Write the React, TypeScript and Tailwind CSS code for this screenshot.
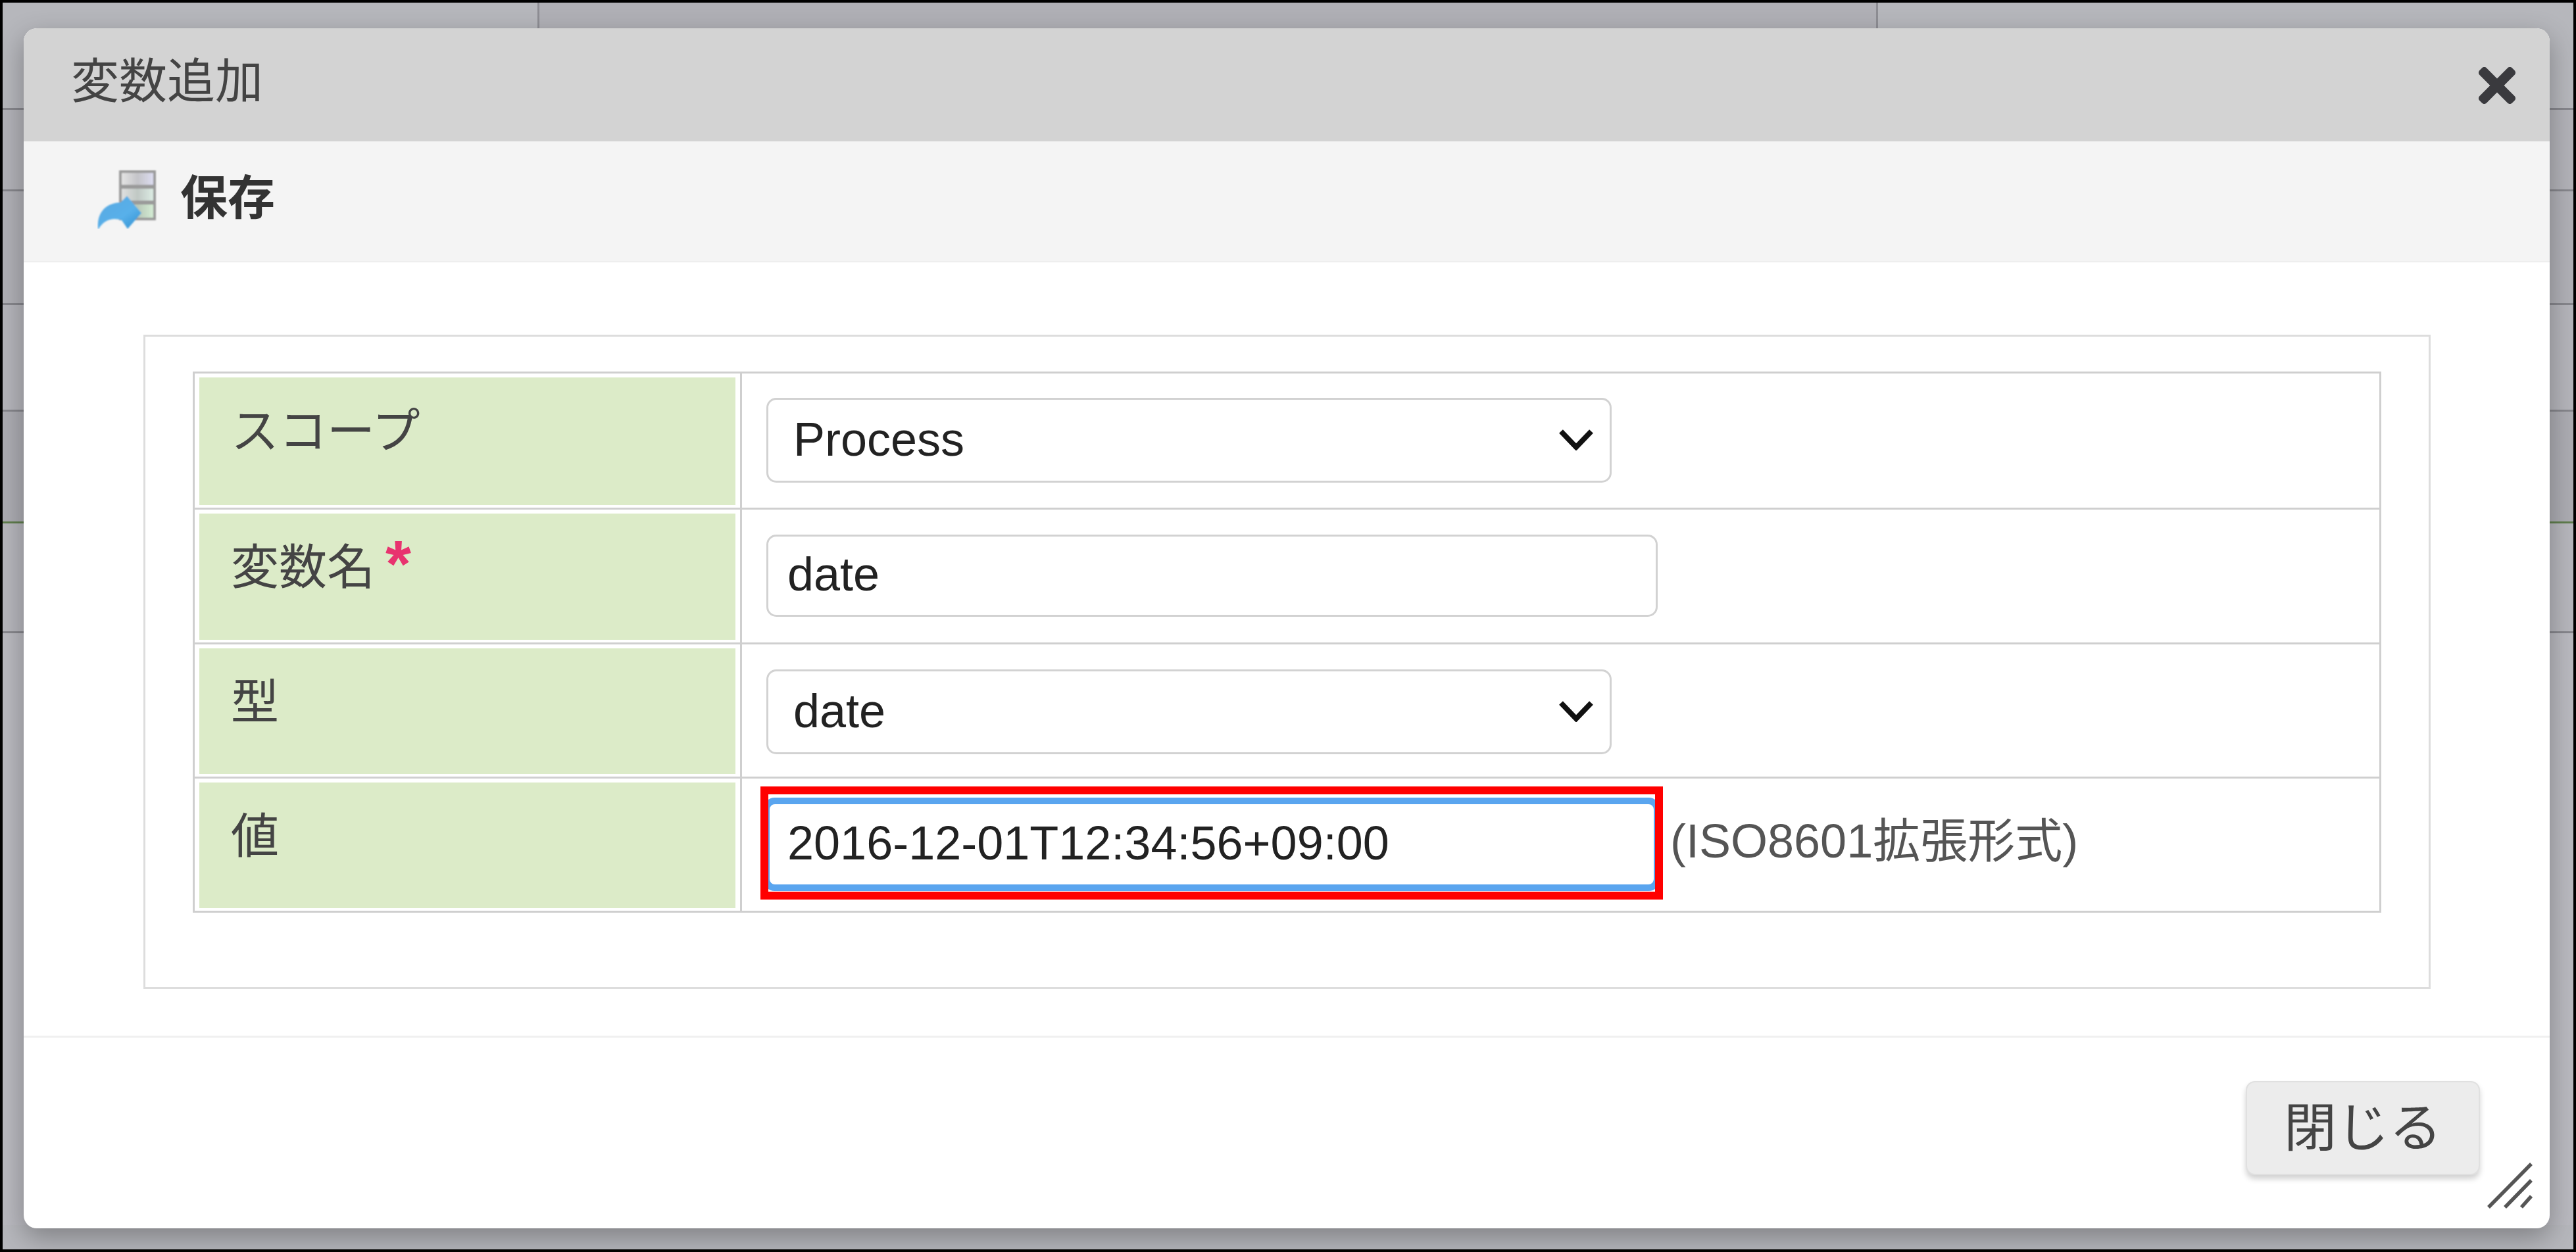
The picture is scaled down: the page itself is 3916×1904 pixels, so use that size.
import { FaTimes } from "react-icons/fa";

const font = "[font-family:'Liberation_Sans','Noto_Sans_CJK_JP',sans-serif]";

function SaveIcon() {
  return (
    <svg width="90" height="90" viewBox="0 0 90 90" className="shrink-0">
      <defs>
        <filter id="soft" x="-10%" y="-10%" width="120%" height="120%">
          <feGaussianBlur stdDeviation="1.3" />
        </filter>
        <linearGradient id="r1" x1="0" x2="1">
          <stop offset="0" stopColor="#e4e4e4" />
          <stop offset="0.5" stopColor="#c4c4c8" />
          <stop offset="1" stopColor="#dcdcf0" />
        </linearGradient>
        <linearGradient id="r2" x1="0" x2="1">
          <stop offset="0" stopColor="#e0e0e0" />
          <stop offset="0.5" stopColor="#c0c8c4" />
          <stop offset="1" stopColor="#dcece4" />
        </linearGradient>
        <linearGradient id="r3" x1="0" x2="1">
          <stop offset="0" stopColor="#d8d8d8" />
          <stop offset="0.5" stopColor="#b8c8b8" />
          <stop offset="1" stopColor="#d4ecd4" />
        </linearGradient>
        <linearGradient id="arrow" x1="0" y1="0" x2="1" y2="1">
          <stop offset="0" stopColor="#5aa8e0" />
          <stop offset="0.6" stopColor="#58b0ea" />
          <stop offset="1" stopColor="#2f8fd0" />
        </linearGradient>
      </defs>
      <g filter="url(#soft)">
        <rect x="33" y="1" width="56" height="76" fill="#9a9a9a" />
        <rect x="37" y="5" width="48" height="18" fill="url(#r1)" />
        <rect x="37" y="29" width="48" height="18" fill="url(#r2)" />
        <rect x="37" y="53" width="48" height="20" fill="url(#r3)" />
        <path
          d="M1 90 C-1 68 10 51 35 50 L45 40 L67 66 L46 90 L37 77 C24 72 10 76 2 90 Z"
          fill="url(#arrow)"
        />
      </g>
    </svg>
  );
}

function Chevron() {
  return (
    <svg
      width="54"
      height="33"
      viewBox="0 0 54 33"
      className="absolute right-[27px] top-[47px] pointer-events-none"
    >
      <path d="M4 4 L27 28 L50 4" fill="none" stroke="#111" strokeWidth="8" />
    </svg>
  );
}

function Label({ text, required }: { text: string; required?: boolean }) {
  return (
    <div className="w-[832px] shrink-0 border-r-[3px] border-[#cfcfcf] pl-[7px] pr-[7px] pt-[6px] pb-[4px]">
      <div className="flex h-full items-start bg-[#dcebc8] pl-[48px] pt-[32px] text-[73px] leading-[100px] text-[#444]">
        <span>{text}</span>
        {required && (
          <span className="ml-[16px] mt-[-6px] text-[100px] font-bold leading-[100px] text-[#e8336f]">*</span>
        )}
      </div>
    </div>
  );
}

function Select({ value, top }: { value: string; top: number }) {
  return (
    <div className={top === 37 ? "relative mt-[37px] w-[1285px]" : "relative mt-[38px] w-[1285px]"}>
      <select
        defaultValue={value}
        className="block h-[129px] w-full appearance-none rounded-[15px] border-[3px] border-[#d2d2d2] bg-white pb-[4px] pl-[38px] text-[72px] text-[#222] outline-none"
      >
        <option>{value}</option>
      </select>
      <Chevron />
    </div>
  );
}

export default function App() {
  return (
    <div className={`relative h-screen w-screen overflow-hidden border-4 border-black bg-[#b6b7bc] ${font}`}>
      {/* page behind the modal */}
      <div className="flex h-[163px] border-b-[3px] border-[#86868c]">
        <div className="w-[816px] border-r-[3px] border-[#8e8e94]" />
        <div className="w-[2035px] border-r-[3px] border-[#8e8e94] bg-[#b0b0b6]" />
      </div>
      <div className="h-[124px] border-b-[3px] border-[#86868c] bg-[#b2b2b8]" />
      <div className="h-[173px] border-b-[3px] border-[#86868c] bg-[#b0b0b6]" />
      <div className="h-[162px] border-b-[3px] border-[#86868c] bg-[#b4b4ba]" />
      <div className="h-[170px] border-b-[3px] border-[#5f7d4d] bg-[#acacb2]" />
      <div className="h-[167px] border-b-[3px] border-[#86868c] bg-[#b6b6bc]" />
      <div className="h-[900px] bg-[#b9b9bf]" />

      {/* modal */}
      <div className="absolute left-[32px] top-[39px] flex h-[1825px] w-[3840px] flex-col overflow-hidden rounded-[20px] bg-white shadow-[0_14px_40px_rgba(0,0,0,0.3)]">
        <div className="flex h-[172px] shrink-0 items-start justify-between bg-[#d3d3d3] pl-[72px] pr-[52px]">
          <span className="mt-[31px] text-[73px] leading-[100px] text-[#444]">変数追加</span>
          <FaTimes viewBox="0 80 352 352" className="mt-[58px] h-[58px] w-[56px] text-[#3a3a3e]" />
        </div>

        <div className="flex h-[184px] shrink-0 items-start border-b-2 border-[#eeeeee] bg-[#f4f4f4] pl-[112px]">
          <div className="mt-[43px]">
            <SaveIcon />
          </div>
          <span className="ml-[36px] mt-[36px] text-[72px] font-bold leading-[100px] text-[#333]">保存</span>
        </div>

        <div className="flex-1 border-b-[3px] border-[#f0f0f0] pl-[182px] pt-[110px]">
          <div className="h-[995px] w-[3477px] border-[3px] border-[#dddddd] pl-[72px] pt-[53px]">
            <div className="w-[3327px] border-[3px] border-[#cfcfcf] text-[#444]">
              <div className="flex h-[207px] border-b-[3px] border-[#cfcfcf]">
                <Label text="スコープ" />
                <div className="pl-[37px]">
                  <Select value="Process" top={37} />
                </div>
              </div>
              <div className="flex h-[205px] border-b-[3px] border-[#cfcfcf]">
                <Label text="変数名" required />
                <div className="pl-[37px] pt-[38px]">
                  <input
                    readOnly
                    value="date"
                    className="block h-[125px] w-[1355px] rounded-[15px] border-[3px] border-[#d2d2d2] pb-[5px] pl-[29px] text-[72px] text-[#222] outline-none"
                  />
                </div>
              </div>
              <div className="flex h-[204px] border-b-[3px] border-[#cfcfcf]">
                <Label text="型" />
                <div className="pl-[37px]">
                  <Select value="date" top={38} />
                </div>
              </div>
              <div className="flex h-[201px]">
                <Label text="値" />
                <div className="flex items-start pl-[32px] pt-[29px]">
                  <div className="relative">
                    <input
                      readOnly
                      value="2016-12-01T12:34:56+09:00"
                      className="block h-[142px] w-[1364px] rounded-[18px] border-[10px] border-[#5aa5ef] pb-[5px] pl-[27px] text-[72px] text-[#222] outline-none"
                    />
                    <div className="pointer-events-none absolute -bottom-[13px] -left-[4px] -right-[4px] -top-[17px] border-[12px] border-[#ff0000]" />
                  </div>
                  <span className="ml-[15px] mt-[21px] text-[72px] leading-[90px] text-[#555]">(ISO8601拡張形式)</span>
                </div>
              </div>
            </div>
          </div>
        </div>

        <div className="flex h-[290px] shrink-0 justify-end pr-[106px] pt-[66px]">
          <button className="h-[143px] w-[356px] rounded-[14px] border-2 border-[#e0e0e0] bg-[#ececec] text-[80px] text-[#444] shadow-[0_6px_8px_rgba(0,0,0,0.18)]">
            閉じる
          </button>
        </div>

        <svg
          width="70"
          height="72"
          viewBox="0 0 70 72"
          className="absolute bottom-[29px] right-[26px]"
        >
          <path d="M3 69 L68 3 M28 69 L68 28 M53 69 L68 52" stroke="#555" strokeWidth="5.5" fill="none" />
        </svg>
      </div>
    </div>
  );
}
